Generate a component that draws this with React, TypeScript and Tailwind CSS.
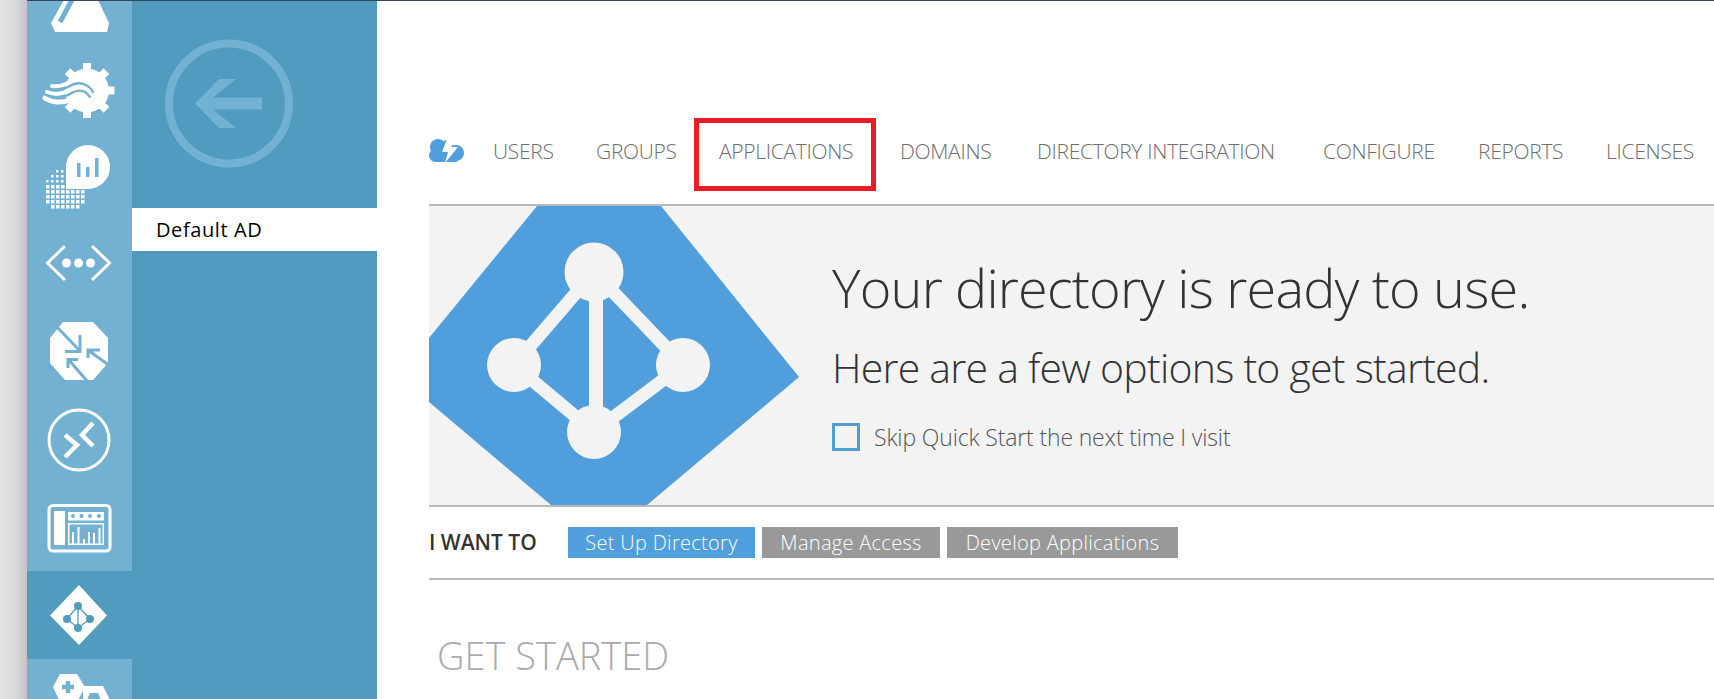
import React from "react";

const RAIL = "#73b1d2";
const BLADE = "#519bbf";

function RailIcon({ top, selected, children }: { top: number; selected?: boolean; children: React.ReactNode }) {
  return (
    <div className={selected ? "h-[88px] w-[105px] shrink-0 bg-[#519bbf]" : "h-[88px] w-[105px] shrink-0"}>
      <svg width="105" height="88" viewBox={`27 ${top} 105 88`} className="block">
        {children}
      </svg>
    </div>
  );
}

const dots: { x: number; y: number; s: number }[] = [];
for (let y = 170; y <= 210; y += 5) {
  for (let x = 46; x <= 84; x += 5) {
    const cx = x + 1.5;
    const cy = y + 1.5;
    const inCircle = Math.hypot(cx - 65, cy - 190) <= 21;
    const inBubble = cx > 64 && cy < 190;
    if (inCircle && !inBubble) dots.push({ x, y, s: y < 185 ? 2.5 : 3.5 });
  }
}

const navItems = [
  { label: "USERS", cls: "w-[60px]" },
  { label: "GROUPS", cls: "w-[80px]" },
  { label: "APPLICATIONS", cls: "w-[138px]" },
  { label: "DOMAINS", cls: "w-[94px]" },
  { label: "DIRECTORY INTEGRATION", cls: "w-[243px]" },
  { label: "CONFIGURE", cls: "w-[112px]" },
  { label: "REPORTS", cls: "w-[85px]" },
  { label: "LICENSES", cls: "w-[87px]" },
];

export default function App() {
  return (
    <div className="flex h-[699px] w-full overflow-hidden bg-white font-['Open_Sans',sans-serif]">
      <div className="w-[27px] shrink-0 bg-linear-to-r from-[#e4e4e4] via-[#dcdcdc] to-[#c4c4c4]" />
      <div className="flex min-w-0 flex-1 flex-col border-t border-[#3b4656]">
        <div className="flex min-h-0 flex-1">
          {/* icon rail */}
          <div className="flex w-[105px] shrink-0 flex-col overflow-hidden bg-[#73b1d2]">
            <div className="-mt-[46px] flex flex-col">
              <RailIcon top={-45}>
                <polygon points="65,-2 51,23 55,32 107,32 109,23 97,-2" fill="#fff" strokeLinejoin="round" />
                <line x1="73" y1="-2" x2="60" y2="22" stroke={RAIL} strokeWidth="5" />
              </RailIcon>
              <RailIcon top={43}>
                <circle cx="87" cy="90.5" r="22" fill="#fff" />
                {[0, 45, 90, 135, 180, 225, 315].map((a) => (
                  <rect key={a} x="83" y="63" width="8" height="10" fill="#fff" transform={`rotate(${a} 87 90.5)`} />
                ))}
                <path d="M44,82 L66,76 L62,84 L44,86 Z" fill={RAIL} />
                <g fill="none" stroke="#fff" strokeLinecap="round">
                  <path d="M52,86 C58,87 62,86 68,83 C72,80 76,78 82,80" strokeWidth="4" />
                  <path d="M47,92 C54,95 62,94 68,91 C72,88 76,86 82,86" strokeWidth="4" />
                  <path d="M45,98 C52,103 62,103 70,100 C74,98 78,96 82,95" strokeWidth="5" />
                </g>
                <g fill="none" stroke={RAIL} strokeWidth="2.3" strokeLinecap="round">
                  <path d="M49,89 C56,91 62,90 68,87 C74,83 80,82 86,85 C90,87 92,90 93,92" />
                  <path d="M46,95 C54,98 62,98 68,95 C74,91 80,89 85,92 C88,94 89,96 90,97" />
                </g>
              </RailIcon>
              <RailIcon top={131}>
                {dots.map((d) => (
                  <rect key={`${d.x}-${d.y}`} x={d.x} y={d.y} width={d.s} height={d.s} fill="#fff" />
                ))}
                <path d="M66,167 a22,22 0 1 1 22,22 L66,189 Z" fill="#fff" />
                <rect x="77" y="163" width="3.5" height="14" fill={RAIL} />
                <rect x="86" y="167" width="3.5" height="10" fill={RAIL} />
                <rect x="95" y="158" width="3.5" height="19" fill={RAIL} />
              </RailIcon>
              <RailIcon top={219}>
                <path d="M65,246 L47.5,263 L65,280 M92,246 L109.5,263 L92,280" fill="none" stroke="#fff" strokeWidth="3" />
                <circle cx="66.5" cy="263" r="4.5" fill="#fff" />
                <circle cx="78.5" cy="263" r="4.5" fill="#fff" />
                <circle cx="90.5" cy="263" r="4.5" fill="#fff" />
              </RailIcon>
              <RailIcon top={307}>
                <polygon points="63,322 93,322 108,338 108,363 93,380 65,380 50,363 50,338" fill="#fff" />
                <g fill="none" stroke={RAIL} strokeWidth="3">
                  <path d="M56,326 L80,351 M80,335 L80,351.5 L65,351.5" />
                  <path d="M68,359 L88,382 M68,368 L68,359.5 L78,359.5" />
                  <path d="M88,350 L110,366 M88,358 L88,350 L100,350" />
                </g>
              </RailIcon>
              <RailIcon top={395}>
                <circle cx="79" cy="440" r="30" fill="none" stroke="#fff" strokeWidth="3" />
                <path d="M65,435 L77,445 L65,457 M93,423 L82,435 L93,446" fill="none" stroke="#fff" strokeWidth="4.5" />
              </RailIcon>
              <RailIcon top={483}>
                <rect x="49" y="505.5" width="61" height="45.5" rx="4" fill="none" stroke="#fff" strokeWidth="3" />
                <rect x="54" y="511" width="11" height="34" fill="#fff" />
                <rect x="68" y="512" width="36" height="8.5" fill="#fff" />
                {[73, 81.5, 90, 99].map((x) => (
                  <circle key={x} cx={x} cy="516" r="2" fill={RAIL} />
                ))}
                <rect x="68" y="523" width="36" height="1.5" fill="#fff" />
                <rect x="68" y="524" width="1.5" height="21" fill="#fff" />
                <rect x="102.5" y="524" width="1.5" height="21" fill="#fff" />
                <rect x="68" y="543.5" width="36" height="1.5" fill="#fff" />
                {[
                  [72, 532],
                  [77.5, 527],
                  [83, 539],
                  [88, 532],
                  [93, 533],
                  [98.5, 528],
                ].map(([x, y]) => (
                  <rect key={x} x={x} y={y} width="2" height={544 - y} fill="#fff" />
                ))}
              </RailIcon>
              <RailIcon top={571} selected>
                <polygon points="79,585 107,615.5 79,645 50,615.5" fill="#fff" />
                <path d="M78,606 L67,619 L78,628 L90,619 Z M78,606 L78,628" fill="none" stroke={BLADE} strokeWidth="1.3" />
                <circle cx="78" cy="606" r="4" fill={BLADE} />
                <circle cx="67" cy="619" r="4" fill={BLADE} />
                <circle cx="90" cy="619" r="4" fill={BLADE} />
                <circle cx="78" cy="628" r="4" fill={BLADE} />
              </RailIcon>
              <RailIcon top={659}>
                <polygon points="53,687 60,674 77,674 85,687 77,702 60,702" fill="#fff" />
                <path d="M68,681 L68,693 M62,687 L74,687" stroke={RAIL} strokeWidth="4.5" />
                <polygon points="83,686 103,686 111,702 83,702" fill="#fff" />
                <polygon points="86,702 90,693 98,693 102,702" fill={RAIL} />
              </RailIcon>
            </div>
          </div>

          {/* blade */}
          <div className="flex w-[245px] shrink-0 flex-col bg-[#519bbf]">
            <div className="h-[207px] shrink-0">
              <svg width="245" height="207" viewBox="132 1 245 207" className="block">
                <circle cx="229" cy="103.5" r="60" fill="none" stroke="#73b1d2" strokeWidth="8" />
                <polygon
                  points="195,103.5 219,79 236,79 213,97.5 262,97.5 262,109.5 213,109.5 236,128 219,128"
                  fill="#73b1d2"
                />
              </svg>
            </div>
            <div className="flex h-[43px] items-center bg-white pl-[24px] text-[20px] tracking-[0.6px] text-black">Default AD</div>
          </div>

          {/* main */}
          <div className="min-w-0 flex-1 bg-white pl-[52px]">
            <div className="flex h-[203px] items-start gap-[28px] pt-[132px]">
              <svg width="36" height="24" viewBox="429 139 36 24" className="mt-[6px] block shrink-0">
                <circle cx="438" cy="147" r="8" fill="#509edb" />
                <circle cx="456" cy="153" r="8" fill="#509edb" />
                <circle cx="447" cy="146" r="6" fill="#509edb" />
                <rect x="435" y="152" width="22" height="10" fill="#509edb" />
                <circle cx="435.5" cy="155.5" r="6.5" fill="#509edb" />
                <polygon points="447,139 456,139 451,147 458,147 445,163 448,152 442,152" fill="#fff" />
              </svg>
              <nav className="relative flex gap-[43px]">
                {navItems.map((n) => (
                  <span key={n.label} className={`${n.cls} whitespace-nowrap text-[21px] font-light leading-[36px] tracking-[-0.3px] text-[#6e6e6e]`}>
                    {n.label}
                  </span>
                ))}
                <div className="absolute left-[201px] top-[-15px] h-[73px] w-[182px] border-[5px] border-[#ed1c24]" />
              </nav>
            </div>

            <div className="flex h-[303px] border-y-2 border-[#b9b9b9] bg-[#f3f3f3]">
              <svg width="370" height="299" viewBox="429 206 370 299" className="block shrink-0">
                <polygon points="537,206 661,206 799,377 647,505 551,505 429,402 429,338" fill="#509edb" />
                <g stroke="#f3f3f3" strokeWidth="13" fill="none">
                  <path d="M594,272 L514,365 L594,432 L683,365 Z" />
                  <path d="M596,272 L596,432" strokeWidth="14" />
                </g>
                <g fill="#f3f3f3">
                  <circle cx="594" cy="272" r="29.5" />
                  <circle cx="514" cy="365" r="27" />
                  <circle cx="683" cy="365" r="27" />
                  <circle cx="594" cy="432" r="27" />
                </g>
              </svg>
              <div className="ml-[33px] flex flex-col pt-[46px] font-light text-[#333]">
                <div className="whitespace-nowrap text-[54px] leading-[70px] tracking-[-0.8px]">Your directory is ready to use.</div>
                <div className="mt-[19px] whitespace-nowrap text-[41px] leading-[52px] tracking-[-0.76px]">Here are a few options to get started.</div>
                <div className="mt-[29px] flex items-center gap-[14px]">
                  <div className="h-[28px] w-[28px] border-[3px] border-[#4f9fcf] bg-[#f3f3f3]" />
                  <span className="whitespace-nowrap text-[23px] leading-[30px] tracking-[-0.15px] text-[#555]">Skip Quick Start the next time I visit</span>
                </div>
              </div>
            </div>

            <div className="flex h-[73px] items-center border-b-2 border-[#b9b9b9]">
              <span className="w-[139px] whitespace-nowrap text-[21px] font-semibold text-[#333]">I WANT TO</span>
              <div className="flex gap-[7px] text-[20px] font-light tracking-[0.3px] text-white">
                <button className="h-[31px] w-[187px] whitespace-nowrap bg-[#509edb]">Set Up Directory</button>
                <button className="h-[31px] w-[178px] whitespace-nowrap bg-[#999]">Manage Access</button>
                <button className="h-[31px] w-[231px] whitespace-nowrap bg-[#999]">Develop Applications</button>
              </div>
            </div>

            <div className="pl-[8px] pt-[50px] text-[38px] font-light leading-[50px] text-[#aaa]">GET STARTED</div>
          </div>
        </div>
      </div>
    </div>
  );
}
